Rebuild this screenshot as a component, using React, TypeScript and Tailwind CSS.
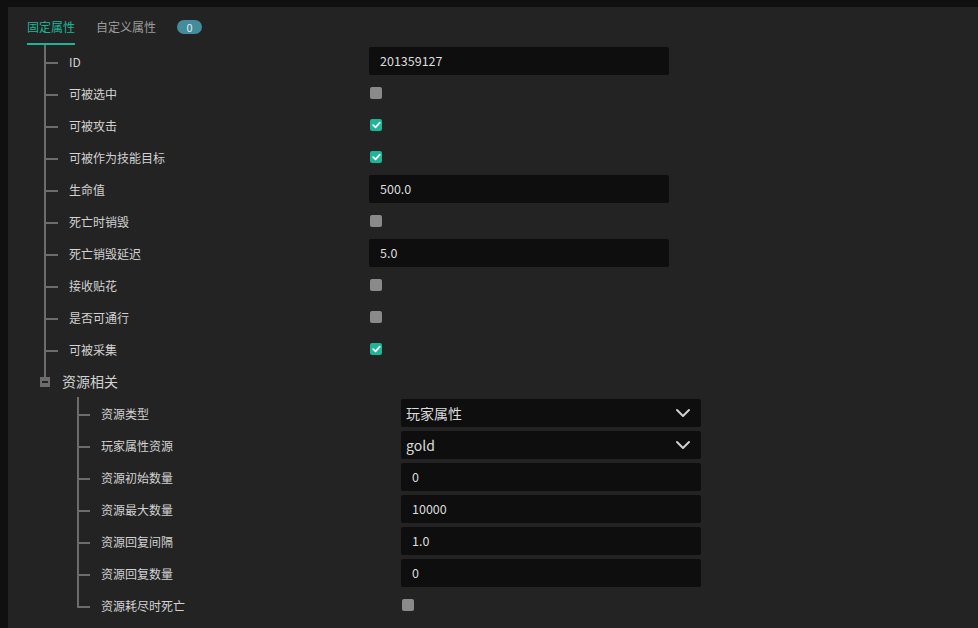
import React from 'react';

type Field =
  | { label: string; kind: 'input'; value: string }
  | { label: string; kind: 'check'; checked: boolean }
  | { label: string; kind: 'select'; value: string };

const baseFields: Field[] = [
  { label: 'ID', kind: 'input', value: '201359127' },
  { label: '可被选中', kind: 'check', checked: false },
  { label: '可被攻击', kind: 'check', checked: true },
  { label: '可被作为技能目标', kind: 'check', checked: true },
  { label: '生命值', kind: 'input', value: '500.0' },
  { label: '死亡时销毁', kind: 'check', checked: false },
  { label: '死亡销毁延迟', kind: 'input', value: '5.0' },
  { label: '接收贴花', kind: 'check', checked: false },
  { label: '是否可通行', kind: 'check', checked: false },
  { label: '可被采集', kind: 'check', checked: true },
];

const resourceFields: Field[] = [
  { label: '资源类型', kind: 'select', value: '玩家属性' },
  { label: '玩家属性资源', kind: 'select', value: 'gold' },
  { label: '资源初始数量', kind: 'input', value: '0' },
  { label: '资源最大数量', kind: 'input', value: '10000' },
  { label: '资源回复间隔', kind: 'input', value: '1.0' },
  { label: '资源回复数量', kind: 'input', value: '0' },
  { label: '资源耗尽时死亡', kind: 'check', checked: false },
];

const Checkbox = ({ checked }: { checked: boolean }) =>
  checked ? (
    <div className="ml-px w-3 h-3 rounded-[2px] bg-[#1db597] flex items-center justify-center">
      <svg width="9" height="8" viewBox="0 0 9 8" fill="none">
        <path d="M1.2 4.2 L3.5 6.3 L7.8 1.6" stroke="white" strokeWidth="1.8" strokeLinecap="round" strokeLinejoin="round" />
      </svg>
    </div>
  ) : (
    <div className="ml-px w-3 h-3 rounded-[2px] bg-[#8a8a8a]" />
  );

const Control = ({ field }: { field: Field }) => {
  if (field.kind === 'check') return <Checkbox checked={field.checked} />;
  if (field.kind === 'select')
    return (
      <div className="w-[300px] h-7 rounded-[2px] bg-[#0e0e0e] flex items-center justify-between pl-[5px] pr-[10px] text-[14px] text-[#dcdcdc]">
        <span className="pt-px">{field.value}</span>
        <svg width="16" height="10" viewBox="0 0 16 10" fill="none">
          <path d="M2 2 L8 8 L14 2" stroke="#d0d0d0" strokeWidth="2" strokeLinecap="round" strokeLinejoin="round" />
        </svg>
      </div>
    );
  return (
    <div className="w-[300px] h-7 rounded-[2px] bg-[#0e0e0e] flex items-center pl-[11px] pt-px text-[12.5px] text-[#dcdcdc]">
      {field.value}
    </div>
  );
};

// tree guide: vertical line + horizontal connector
const Guide = ({ last, width }: { last?: boolean; width: number }) => (
  <div className="self-stretch flex flex-col" style={{ width }}>
    <div className="h-[17px] border-l-2 border-[#6c6c6c]" />
    <div className="h-[2px] bg-[#6c6c6c]" />
    {!last && <div className="flex-1 border-l-2 border-[#6c6c6c]" />}
  </div>
);

const Row = ({ field, last, width }: { field: Field; last?: boolean; width: number }) => (
  <div className="flex items-center h-8">
    <Guide last={last} width={width} />
    <div className="ml-[11px] w-[300px] pt-px text-[12px] text-[#d2d2d2]">{field.label}</div>
    <Control field={field} />
  </div>
);

export default function App() {
  return (
    <div
      className="w-[978px] h-[628px] bg-[#101010] pt-[7px] pl-2 overflow-hidden"
      style={{ fontFamily: '"Microsoft YaHei", "Noto Sans CJK SC", "Noto Sans", sans-serif' }}
    >
      <div className="h-full bg-[#232323] pl-[19px]">
        {/* Tabs */}
        <div className="flex items-end h-[38px]">
          <div className="flex flex-col">
            <span className="text-[12px] leading-5 text-[#1db597] pb-[6px]">固定属性</span>
            <div className="h-[2px] bg-[#1db597]" />
          </div>
          <span className="ml-[21px] text-[12px] leading-5 text-[#9c9c9c] mb-2">自定义属性</span>
          <span className="ml-[21px] mb-[11px] w-[25px] h-[14px] rounded-full bg-[#458c9a] text-[11px] leading-[14px] text-[#d8f2f6] text-center">
            0
          </span>
        </div>

        {/* Tree */}
        <div className="ml-[17px]">
          {baseFields.map((f) => (
            <Row key={f.label} field={f} width={14} />
          ))}
          <div className="flex items-center h-8">
            <div className="self-stretch w-[10px] -ml-1 flex flex-col items-center">
              <div className="h-[12px] w-[2px] bg-[#6c6c6c]" />
              <div className="w-[10px] h-[10px] bg-[#6c6c6c] flex items-center justify-center">
                <div className="w-[6px] h-[2px] bg-[#232323]" />
              </div>
            </div>
            <span className="ml-[12px] pt-px text-[14px] text-[#d2d2d2]">资源相关</span>
          </div>
          <div className="ml-[33px]">
            {resourceFields.map((f, i) => (
              <Row key={f.label} field={f} width={13} last={i === resourceFields.length - 1} />
            ))}
          </div>
        </div>
      </div>
    </div>
  );
}
